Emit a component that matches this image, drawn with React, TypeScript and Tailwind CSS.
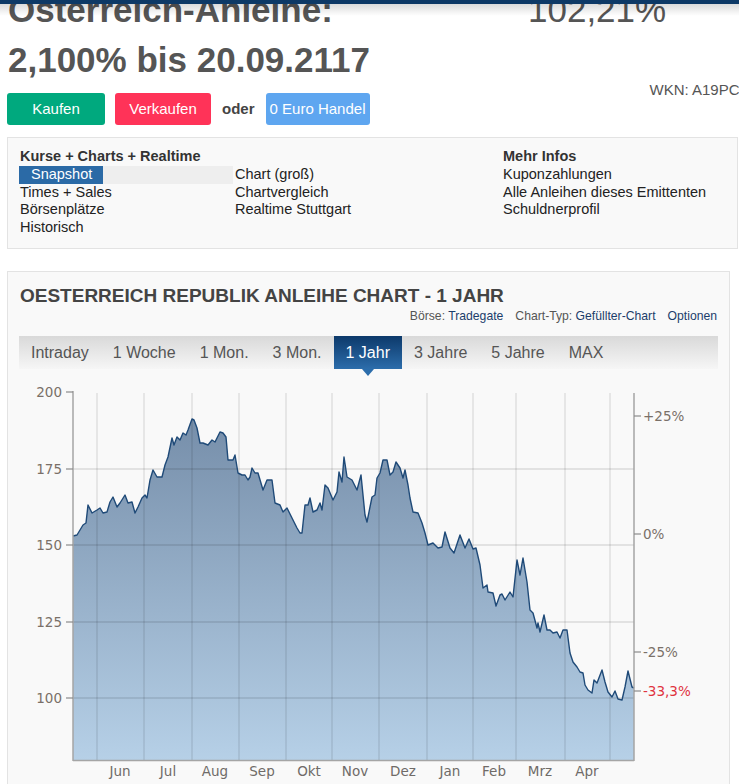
import React from "react";

const pts: [number, number][] = [
  [73,536],[77,535],[80,530],[83,525],[86,523],[88,505],[92,513],[97,510],[100,508],[103,513],[107,512],[110,502],[113,497],[117,507],[120,503],[125,495],[128,503],[132,502],[135,513],[138,507],[142,498],[145,495],[147,498],[150,480],[153,470],[157,477],[162,477],[165,465],[168,457],[172,438],[174,445],[177,437],[180,440],[183,433],[186,435],[188,430],[192,419],[194,420],[197,428],[200,443],[203,443],[208,445],[212,440],[215,442],[220,432],[223,433],[226,437],[228,460],[233,460],[235,455],[238,473],[242,475],[245,475],[248,480],[250,477],[252,468],[255,473],[258,473],[263,490],[267,480],[272,480],[275,503],[280,505],[283,512],[287,508],[292,518],[297,528],[300,533],[302,533],[305,505],[308,505],[310,498],[313,512],[317,510],[320,503],[322,510],[325,485],[328,488],[333,500],[337,492],[339,472],[342,482],[344,457],[347,477],[352,480],[357,490],[361,475],[365,515],[367,522],[372,497],[375,495],[377,478],[380,473],[383,460],[387,460],[390,475],[393,472],[396,462],[400,468],[403,478],[405,470],[408,485],[410,498],[413,512],[418,513],[422,523],[425,533],[428,545],[433,543],[438,548],[442,547],[445,532],[450,548],[454,553],[460,535],[465,548],[469,539],[473,549],[476,548],[480,565],[483,588],[487,585],[488,592],[493,593],[496,606],[500,595],[502,594],[505,600],[510,592],[513,597],[517,560],[520,575],[523,558],[527,582],[530,610],[533,613],[537,628],[538,623],[540,632],[544,615],[547,630],[550,630],[553,633],[557,632],[560,638],[563,630],[567,630],[570,653],[573,662],[577,667],[580,672],[583,673],[585,685],[588,690],[592,693],[594,680],[597,683],[602,670],[605,682],[608,692],[612,697],[615,691],[618,699],[622,700],[625,687],[628,671],[632,687],[634,688],
];

const linePath = pts.map((p, i) => (i === 0 ? "M" : "L") + p[0] + "," + p[1]).join(" ");
const areaPath = "M73,760 " + pts.map((p) => "L" + p[0] + "," + p[1]).join(" ") + " L634,760 Z";

const vGrid = [97, 144, 192, 239, 286, 332, 379, 427, 473, 516, 565, 610];
const hGrid = [469, 545, 622, 698];
const leftLabels: [string, number][] = [["200", 392], ["175", 469], ["150", 545], ["125", 622], ["100", 698]];
const rightLabels: [string, number, string][] = [["+25%", 416, "#7a7068"], ["0%", 534, "#7a7068"], ["-25%", 652, "#7a7068"], ["-33,3%", 691, "#e0333f"]];
const months: [string, number][] = [["Jun", 120], ["Jul", 168], ["Aug", 215], ["Sep", 262], ["Okt", 309], ["Nov", 355], ["Dez", 403], ["Jan", 450], ["Feb", 494], ["Mrz", 540], ["Apr", 587]];

function Chart() {
  return (
    <svg width={699} height={420} viewBox="19 369 699 420" className="block">
      <defs>
        <linearGradient id="fillg" gradientUnits="userSpaceOnUse" x1="0" y1="392" x2="0" y2="760">
          <stop offset="0" stopColor="#7189a5" />
          <stop offset="1" stopColor="#b6d0e7" />
        </linearGradient>
      </defs>
      <path d={areaPath} fill="url(#fillg)" />
      {hGrid.map((y) => (
        <line key={"h" + y} x1={73} x2={634} y1={y} y2={y} stroke="rgba(0,0,0,0.12)" strokeWidth={1.5} />
      ))}
      {vGrid.map((x) => (
        <line key={"v" + x} x1={x} x2={x} y1={393} y2={760} stroke="rgba(0,0,0,0.1)" strokeWidth={1.5} />
      ))}
      <path d={linePath} fill="none" stroke="#1f4a78" strokeWidth={1.4} strokeLinejoin="round" />
      <line x1={73} x2={73} y1={391} y2={761} stroke="#a5a5a5" strokeWidth={1.5} />
      <line x1={634} x2={634} y1={393} y2={761} stroke="#a5a5a5" strokeWidth={1.5} />
      <line x1={73} x2={634} y1={760.5} y2={760.5} stroke="#a5a5a5" strokeWidth={1.5} />
      {leftLabels.map(([t, y]) => (
        <g key={t}>
          <line x1={66} x2={73} y1={y} y2={y} stroke="#8a8a8a" strokeWidth={1.2} />
          <text x={62} y={y + 5} textAnchor="end" fontFamily="'DejaVu Sans', Verdana, sans-serif" fontSize={13.5} fill="#7a7068">{t}</text>
        </g>
      ))}
      {rightLabels.map(([t, y, c]) => (
        <g key={t}>
          <line x1={634} x2={641} y1={y} y2={y} stroke="#8a8a8a" strokeWidth={1.2} />
          <text x={643} y={y + 5} fontFamily="'DejaVu Sans', Verdana, sans-serif" fontSize={13.5} fill={c}>{t}</text>
        </g>
      ))}
      {months.map(([t, x]) => (
        <text key={t} x={x} y={776} textAnchor="middle" fontFamily="'DejaVu Sans', Verdana, sans-serif" fontSize={13.5} fill="#6f6b68">{t}</text>
      ))}
    </svg>
  );
}

const tabs = ["Intraday", "1 Woche", "1 Mon.", "3 Mon.", "1 Jahr", "3 Jahre", "5 Jahre", "MAX"];

export default function App() {
  return (
    <div className="relative w-[739px] h-[784px] overflow-hidden bg-white font-['Liberation_Sans',Arial,sans-serif]">
      <div className="flex -mt-[15px]">
        <h1 className="w-[528px] shrink-0 pl-[8px] text-[35px] leading-[50px] font-bold text-[#555]">
          Österreich-Anleihe:
          <br />
          2,100% bis 20.09.2117
        </h1>
        <div className="text-[35px] leading-[50px] text-[#555] whitespace-nowrap">102,21%</div>
      </div>

      <div className="flex -mt-[4px]">
        <div className="flex items-center mt-[12px] ml-[7px]">
          <div className="w-[98px] h-[32px] rounded-[3px] bg-[#00a97e] text-white text-[15px] flex items-center justify-center">Kaufen</div>
          <div className="ml-[10px] w-[96px] h-[32px] rounded-[3px] bg-[#ff3358] text-white text-[15px] flex items-center justify-center">Verkaufen</div>
          <span className="ml-[11px] font-bold text-[15px] text-[#444]">oder</span>
          <div className="ml-[11px] w-[104px] h-[32px] rounded-[3px] bg-[#5ea6f0] text-white text-[15px] flex items-center justify-center whitespace-nowrap">0 Euro Handel</div>
        </div>
        <div className="ml-[280px] text-[15px] leading-[18px] text-[#555] whitespace-nowrap">WKN: A19PC</div>
      </div>

      <div className="mt-[12px] ml-[7px] w-[731px] h-[112px] border border-[#e3e3e3] bg-[#f9f9f9] pt-[10px] pl-[12px] text-[14.5px] leading-[17.75px] text-[#222]">
        <div className="grid grid-cols-[215px_268px_1fr]">
          <div>
            <div className="font-bold text-[#333]">Kurse + Charts + Realtime</div>
            <div className="-ml-[1px] w-[214px] bg-[#eeeeee]">
              <span className="inline-block w-[84px] bg-[#2b6aa6] pl-[12px] text-white">Snapshot</span>
            </div>
            <div>Times + Sales</div>
            <div>Börsenplätze</div>
            <div>Historisch</div>
          </div>
          <div>
            <div>&nbsp;</div>
            <div>Chart (groß)</div>
            <div>Chartvergleich</div>
            <div>Realtime Stuttgart</div>
          </div>
          <div>
            <div className="font-bold text-[#333]">Mehr Infos</div>
            <div>Kuponzahlungen</div>
            <div>Alle Anleihen dieses Emittenten</div>
            <div>Schuldnerprofil</div>
          </div>
        </div>
      </div>

      <div className="mt-[22px] ml-[7px] w-[723px] h-[600px] border border-[#e3e3e3] bg-[#f9f9f9] pt-[12px] px-[11px]">
        <div className="pl-[1px] text-[19px] leading-[24px] font-bold text-[#444]">OESTERREICH REPUBLIK ANLEIHE CHART - 1 JAHR</div>
        <div className="flex justify-end pr-[1px] text-[12.2px] leading-[16px] gap-[12px]">
          <span><span className="text-[#555]">Börse:</span> <span className="text-[#1c3d6b]">Tradegate</span></span>
          <span><span className="text-[#555]">Chart-Typ:</span> <span className="text-[#1c3d6b]">Gefüllter-Chart</span></span>
          <span className="text-[#1c3d6b]">Optionen</span>
        </div>
        <div className="mt-[12px] h-[33px] flex bg-linear-to-b from-[#d9d9d9] to-[#f6f6f6]">
          {tabs.map((t) =>
            t === "1 Jahr" ? (
              <div key={t} className="relative h-full px-[12px] flex items-center text-[16px] text-white bg-linear-to-b from-[#0d3a6b] to-[#2c6dab]">
                {t}
                <div className="absolute left-1/2 -translate-x-1/2 top-full w-0 h-0 border-l-[6px] border-r-[6px] border-t-[7px] border-l-transparent border-r-transparent border-t-[#2c6dab]" />
              </div>
            ) : (
              <div key={t} className="h-full px-[12px] flex items-center text-[16px] text-[#555]">{t}</div>
            )
          )}
        </div>
        <Chart />
      </div>

      <div className="absolute top-0 left-0 w-full pointer-events-none">
        <div className="h-[4px] bg-[#0d3966]" />
        <div className="h-[12px] bg-linear-to-b from-[#00000024] to-transparent" />
      </div>
    </div>
  );
}
